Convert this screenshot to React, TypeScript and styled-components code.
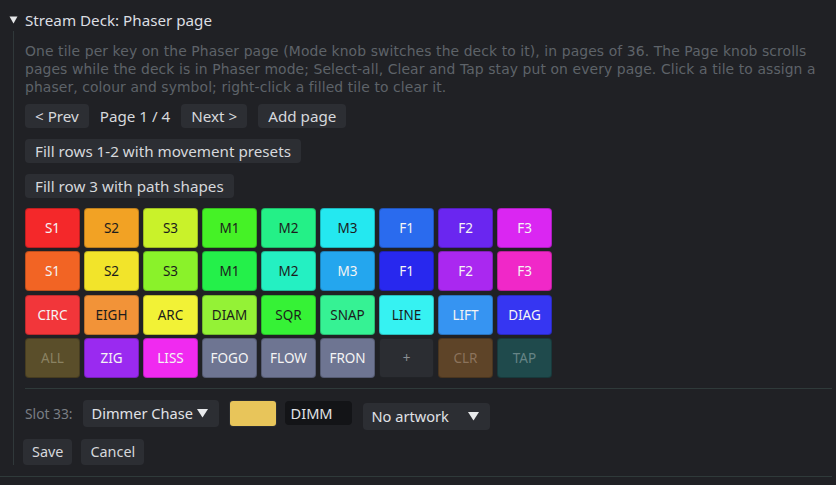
import React from 'react'
import styled, { createGlobalStyle } from 'styled-components'

const GlobalStyle = createGlobalStyle`
  html, body {
    margin: 0;
    padding: 0;
    background: #202125;
  }
  body {
    font-family: 'Noto Sans', 'Open Sans', sans-serif;
    color: #d6d8dc;
  }
`

type Tile = { label: string; bg: string; fg: string }

const W = '#f4f4f4'
const D = '#1c1c1c'

const tiles: Tile[] = [
  { label: 'S1', bg: '#f4282a', fg: W },
  { label: 'S2', bg: '#f2a224', fg: D },
  { label: 'S3', bg: '#c9f22a', fg: D },
  { label: 'M1', bg: '#45f226', fg: D },
  { label: 'M2', bg: '#24f087', fg: D },
  { label: 'M3', bg: '#24e8f0', fg: D },
  { label: 'F1', bg: '#2a6bee', fg: W },
  { label: 'F2', bg: '#6a26f0', fg: W },
  { label: 'F3', bg: '#da26f2', fg: W },

  { label: 'S1', bg: '#f26424', fg: W },
  { label: 'S2', bg: '#f2e42a', fg: D },
  { label: 'S3', bg: '#8af22a', fg: D },
  { label: 'M1', bg: '#24f04a', fg: D },
  { label: 'M2', bg: '#24f0c2', fg: D },
  { label: 'M3', bg: '#24a6ee', fg: W },
  { label: 'F1', bg: '#2828ee', fg: W },
  { label: 'F2', bg: '#aa28f0', fg: W },
  { label: 'F3', bg: '#f028c8', fg: W },

  { label: 'CIRC', bg: '#f2363a', fg: W },
  { label: 'EIGH', bg: '#f29338', fg: D },
  { label: 'ARC', bg: '#f2f236', fg: D },
  { label: 'DIAM', bg: '#94f236', fg: D },
  { label: 'SQR', bg: '#36f236', fg: D },
  { label: 'SNAP', bg: '#36f294', fg: D },
  { label: 'LINE', bg: '#36f2f2', fg: D },
  { label: 'LIFT', bg: '#3694f2', fg: W },
  { label: 'DIAG', bg: '#3636f2', fg: W },

  { label: 'ALL', bg: '#5a4e2a', fg: '#8a8262' },
  { label: 'ZIG', bg: '#9a2af0', fg: W },
  { label: 'LISS', bg: '#f02af0', fg: W },
  { label: 'FOGO', bg: '#6e7592', fg: W },
  { label: 'FLOW', bg: '#6e7592', fg: W },
  { label: 'FRON', bg: '#6e7592', fg: W },
  { label: '+', bg: '#2b2d32', fg: '#8a8e94' },
  { label: 'CLR', bg: '#5e4428', fg: '#8c735c' },
  { label: 'TAP', bg: '#1f4a4c', fg: '#668486' },
]

const hintLines = [
  'One tile per key on the Phaser page (Mode knob switches the deck to it), in pages of 36. The Page knob scrolls',
  'pages while the deck is in Phaser mode; Select-all, Clear and Tap stay put on every page. Click a tile to assign a',
  'phaser, colour and symbol; right-click a filled tile to clear it.',
]

const Caret = () => (
  <svg width="13" height="10" viewBox="0 0 13 10">
    <path d="M1 1 L12 1 L6.5 9.5 Z" fill="#e8eaec" />
  </svg>
)

const App = () => {
  return (
    <>
      <GlobalStyle />
      <Page.Wrap>
        <Page.Summary>
          <Page.Arrow>
            <svg width="9" height="8" viewBox="0 0 9 8">
              <path d="M0.5 0.5 L8.5 0.5 L4.5 7.5 Z" fill="#e4e6e8" />
            </svg>
          </Page.Arrow>
          Stream Deck: Phaser page
        </Page.Summary>
        <Page.Body>
          <Page.Hint>
            {hintLines.map((l, i) => (
              <Page.HintLine key={i}>{l}</Page.HintLine>
            ))}
          </Page.Hint>
          <Page.Row>
            <Page.Button>&lt; Prev</Page.Button>
            <Page.Label>Page 1 / 4</Page.Label>
            <Page.Button>Next &gt;</Page.Button>
            <Page.Button>Add page</Page.Button>
          </Page.Row>
          <Page.Row>
            <Page.Button>Fill rows 1-2 with movement presets</Page.Button>
          </Page.Row>
          <Page.Row>
            <Page.Button>Fill row 3 with path shapes</Page.Button>
          </Page.Row>
          <Page.Grid>
            {tiles.map((t, i) => (
              <Page.Tile key={i} $bg={t.bg} $fg={t.fg}>
                {t.label}
              </Page.Tile>
            ))}
          </Page.Grid>
          <Page.Rule />
          <Page.Editor>
            <Page.Muted>Slot 33:</Page.Muted>
            <Page.Select $w={136}>
              Dimmer Chase <Caret />
            </Page.Select>
            <Page.Swatch>
              <span />
            </Page.Swatch>
            <Page.Input>DIMM</Page.Input>
            <Page.Select $w={127} $low>
              No artwork <Caret />
            </Page.Select>
          </Page.Editor>
          <Page.Actions>
            <Page.ActionButton>Save</Page.ActionButton>
            <Page.ActionButton>Cancel</Page.ActionButton>
          </Page.Actions>
        </Page.Body>
        <Page.Bottom />
      </Page.Wrap>
    </>
  )
}

export default App

const Page = {
  Wrap: styled.div`
    width: 836px;
    height: 485px;
    overflow: hidden;
    padding-top: 9px;
    box-sizing: border-box;
  `,
  Summary: styled.div`
    display: flex;
    align-items: center;
    height: 22px;
    font-size: 15.2px;
    color: #dcdee2;
    padding-left: 9px;
  `,
  Arrow: styled.span`
    display: inline-flex;
    width: 16px;
  `,
  Body: styled.div`
    margin-left: 13px;
    margin-right: 4px;
    border-left: 1px solid #30383a;
    padding: 11px 0 0 11px;
    display: flex;
    flex-direction: column;
  `,
  Hint: styled.div`
    display: flex;
    flex-direction: column;
    margin-bottom: 8px;
  `,
  HintLine: styled.div`
    height: 18px;
    font-family: 'DejaVu Sans', 'Noto Sans', sans-serif;
    font-size: 13.9px;
    letter-spacing: 0.1px;
    line-height: 18px;
    color: #5e6369;
    white-space: nowrap;
  `,
  Row: styled.div`
    display: flex;
    align-items: center;
    gap: 11px;
    margin-bottom: 11px;
  `,
  Button: styled.div`
    height: 24px;
    padding: 0 10px;
    display: inline-flex;
    align-items: center;
    white-space: nowrap;
    background: #2c2e33;
    border-radius: 4px;
    font-size: 15.2px;
    color: #d6d8dc;
  `,
  ActionButton: styled.div`
    height: 26px;
    padding: 0 9px;
    display: inline-flex;
    align-items: center;
    white-space: nowrap;
    background: #2c2e33;
    border-radius: 4px;
    font-size: 14.4px;
    color: #d6d8dc;
  `,
  Label: styled.span`
    font-size: 15.2px;
    color: #d6d8dc;
  `,
  Grid: styled.div`
    display: grid;
    grid-template-columns: repeat(9, 55px);
    grid-auto-rows: 40px;
    column-gap: 4px;
    row-gap: 3.33px;
    margin-top: -1px;
  `,
  Tile: styled.div<{ $bg: string; $fg: string }>`
    background: ${p => p.$bg};
    color: ${p => p.$fg};
    border: 1px solid rgba(0, 0, 0, 0.22);
    border-radius: 4px;
    display: flex;
    align-items: center;
    justify-content: center;
    font-size: 13.5px;
    box-sizing: border-box;
  `,
  Rule: styled.div`
    height: 1px;
    background: #2f3a3a;
    margin: 10px 0 11px;
  `,
  Editor: styled.div`
    display: flex;
    align-items: flex-start;
    height: 30px;
  `,
  Muted: styled.span`
    font-size: 13.8px;
    line-height: 27px;
    color: #7a7e84;
    margin-right: 10px;
  `,
  Select: styled.div<{ $w: number; $low?: boolean }>`
    height: 27px;
    width: ${p => p.$w}px;
    box-sizing: border-box;
    padding: 0 10px 0 9px;
    margin-top: ${p => (p.$low ? 3 : 0)}px;
    margin-right: 10px;
    display: flex;
    align-items: center;
    justify-content: space-between;
    white-space: nowrap;
    background: #2c2e33;
    border-radius: 4px;
    font-size: 14.6px;
    color: #e0e2e6;
  `,
  Swatch: styled.div`
    width: 48px;
    height: 27px;
    margin-right: 8px;
    box-sizing: border-box;
    padding: 1px;
    background: #2a2c30;
    border-radius: 4px;
    display: flex;
    span {
      flex: 1;
      background: #e8c55a;
      border-radius: 3px;
    }
  `,
  Input: styled.div`
    width: 67px;
    height: 24px;
    margin-top: 1px;
    margin-right: 11px;
    box-sizing: border-box;
    padding: 0 6px;
    display: flex;
    align-items: center;
    background: #131417;
    border-radius: 4px;
    font-size: 14.6px;
    color: #e0e2e6;
  `,
  Actions: styled.div`
    display: flex;
    gap: 9px;
    margin-top: 9px;
    margin-left: -2px;
  `,
  Bottom: styled.div`
    height: 1px;
    background: #2f3a3a;
    margin: 11px 4px 0 0;
  `,
}
